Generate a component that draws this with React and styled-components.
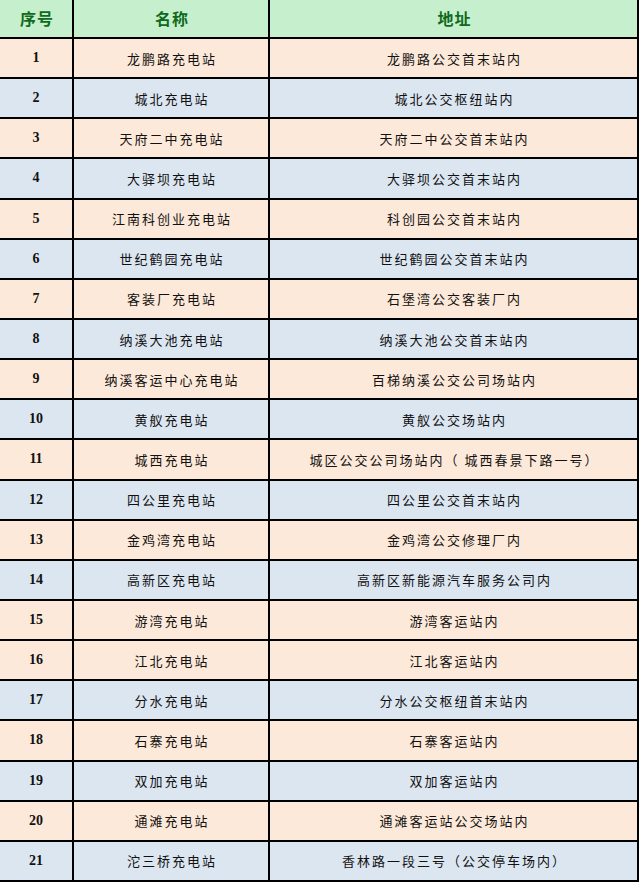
import React from "react";
import styled, { createGlobalStyle } from "styled-components";

const GlobalStyle = createGlobalStyle`
	body {
		margin: 0;
		background: #ffffff;
		font-family: "Noto Sans CJK SC", "Noto Sans", sans-serif;
	}
`;

const COLS = "74px 196px 369px";

const PEACH = "#fde9d9";
const BLUE = "#dce6f1";

const Table = styled.div`
	width: 639px;
	display: flex;
	flex-direction: column;
`;

const Row = styled.div`
	display: grid;
	grid-template-columns: ${COLS};
	height: ${props => props.$height};
	box-sizing: border-box;
	border-bottom: 2px solid #000;
	background-color: ${props => props.$bg};
`;

const Cell = styled.div`
	display: flex;
	align-items: center;
	justify-content: center;
	box-sizing: border-box;
	border-right: 2px solid #000;
	font-size: 13px;
	letter-spacing: 2px;
	color: #111;
	white-space: nowrap;
	padding-left: 2px;
`;

const NumCell = styled(Cell)`
	font-family: "Liberation Serif", "Noto Sans CJK SC", serif;
	font-size: 14px;
	font-weight: bold;
	letter-spacing: 0;
	padding-left: 0;
`;

const HeadCell = styled(Cell)`
	font-size: 16px;
	font-weight: bold;
	letter-spacing: 1px;
	color: #0f6a1c;
	padding-bottom: 2px;
`;

const stations = [
	["龙鹏路充电站", "龙鹏路公交首末站内"],
	["城北充电站", "城北公交枢纽站内"],
	["天府二中充电站", "天府二中公交首末站内"],
	["大驿坝充电站", "大驿坝公交首末站内"],
	["江南科创业充电站", "科创园公交首末站内"],
	["世纪鹤园充电站", "世纪鹤园公交首末站内"],
	["客装厂充电站", "石堡湾公交客装厂内"],
	["纳溪大池充电站", "纳溪大池公交首末站内"],
	["纳溪客运中心充电站", "百梯纳溪公交公司场站内"],
	["黄舣充电站", "黄舣公交场站内"],
	["城西充电站", "城区公交公司场站内（ 城西春景下路一号）"],
	["四公里充电站", "四公里公交首末站内"],
	["金鸡湾充电站", "金鸡湾公交修理厂内"],
	["高新区充电站", "高新区新能源汽车服务公司内"],
	["游湾充电站", "游湾客运站内"],
	["江北充电站", "江北客运站内"],
	["分水充电站", "分水公交枢纽首末站内"],
	["石寨充电站", "石寨客运站内"],
	["双加充电站", "双加客运站内"],
	["通滩充电站", "通滩客运站公交场站内"],
	["沱三桥充电站", "香林路一段三号（公交停车场内）"],
];

// 15、16 两行都是桃色，其余交替
const tones = [
	PEACH, BLUE, PEACH, BLUE, PEACH, BLUE, PEACH, BLUE, PEACH, BLUE, PEACH,
	BLUE, PEACH, BLUE, PEACH, PEACH, BLUE, PEACH, BLUE, PEACH, BLUE,
];

const App = () => {
	return (
		<>
			<GlobalStyle />
			<Table>
				<Row $bg="#c6efce" $height="39px">
					<HeadCell>序号</HeadCell>
					<HeadCell>名称</HeadCell>
					<HeadCell>地址</HeadCell>
				</Row>
				{stations.map(([name, addr], i) => (
					<Row key={i} $bg={tones[i]} $height="40.15px">
						<NumCell>{i + 1}</NumCell>
						<Cell>{name}</Cell>
						<Cell>{addr}</Cell>
					</Row>
				))}
			</Table>
		</>
	);
};

export default App;
